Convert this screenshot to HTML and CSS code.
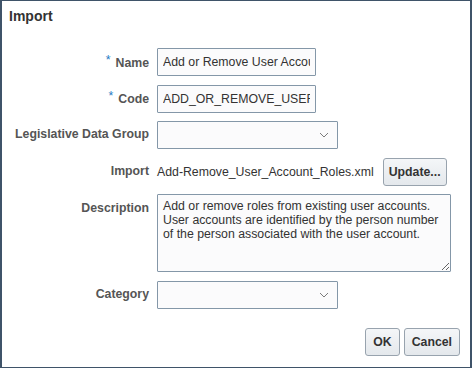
FILE: index.html
```html
<!DOCTYPE html>
<html>
	<head>
		<meta charset="utf-8">
		<title>Import</title>
		<link rel="stylesheet" href="styles.css">
	</head>
	<body>
		<div class="dialog">
			<div class="title">Import</div>
			<div class="form">
				<label class="label"><span class="req">*</span>Name</label>
				<div class="field"><input class="text" type="text" value="Add or Remove User Account Roles"></div>

				<label class="label"><span class="req">*</span>Code</label>
				<div class="field"><input class="text" type="text" value="ADD_OR_REMOVE_USER_ACCOUNT_ROLES"></div>

				<label class="label">Legislative Data Group</label>
				<div class="field">
					<div class="choice">
						<select class="select"><option></option></select>
						<svg class="chevron" width="10" height="6" viewBox="0 0 10 6"><path d="M1 1 L5 5 L9 1" fill="none" stroke="#7b7b7b" stroke-width="1"/></svg>
					</div>
				</div>

				<label class="label">Import</label>
				<div class="field file">
					<span class="filename">Add-Remove_User_Account_Roles.xml</span>
					<button class="btn narrow">Update...</button>
				</div>

				<label class="label top">Description</label>
				<div class="field"><textarea class="area">Add or remove roles from existing user accounts. User accounts are identified by the person number of the person associated with the user account.</textarea></div>

				<label class="label">Category</label>
				<div class="field">
					<div class="choice">
						<select class="select"><option></option></select>
						<svg class="chevron" width="10" height="6" viewBox="0 0 10 6"><path d="M1 1 L5 5 L9 1" fill="none" stroke="#7b7b7b" stroke-width="1"/></svg>
					</div>
				</div>
			</div>
			<div class="footer">
				<button class="btn">OK</button>
				<button class="btn">Cancel</button>
			</div>
		</div>
	</body>
</html>
```

FILE: styles.css
```css
* {
	margin: 0;
	padding: 0;
	box-sizing: border-box;
}

body {
	font-family: "Liberation Sans", Arial, sans-serif;
	font-size: 12.3px;
	color: #333;
	background: #fff;
}

.dialog {
	width: 472px;
	height: 368px;
	border: 1px solid #3f5369;
	border-left-width: 2px;
	border-right-width: 2px;
	display: flex;
	flex-direction: column;
}

.title {
	font-size: 14px;
	font-weight: bold;
	line-height: 16px;
	color: #333;
	padding: 7px 0 0 7px;
}

.form {
	display: grid;
	grid-template-columns: 147px 1fr;
	column-gap: 8px;
	row-gap: 8.5px;
	margin-top: 24px;
	align-items: center;
}

.label {
	text-align: right;
	font-weight: bold;
	color: #555;
	white-space: nowrap;
	line-height: 14px;
	padding-bottom: 2px;
}

.label.top {
	align-self: start;
	padding-top: 7px;
}

.req {
	color: #1f7ac4;
	font-weight: normal;
	margin-right: 5px;
	vertical-align: 3px;
}

.field {
	display: flex;
	align-items: center;
}

.text {
	width: 159px;
	height: 28px;
	border: 1px solid #8497a8;
	border-radius: 1px;
	background: #fbfbfc;
	padding: 0 5px;
	font-family: inherit;
	font-size: 12.3px;
	color: #333;
}

.choice {
	position: relative;
	width: 181px;
	height: 28px;
}

.select {
	appearance: none;
	width: 100%;
	height: 100%;
	border: 1px solid #8497a8;
	border-radius: 1px;
	background: #fbfbfc;
	font-family: inherit;
	font-size: 12.3px;
}

.chevron {
	position: absolute;
	right: 9px;
	top: 11px;
}

.file {
	height: 28px;
}

.filename {
	color: #333;
	margin-right: 9px;
}

.btn {
	height: 28px;
	padding: 0 7px;
	border: 1px solid #98a3ae;
	border-radius: 3px;
	background: linear-gradient(#f4f6f8, #e4e8ec);
	font-family: inherit;
	font-size: 12.3px;
	font-weight: bold;
	color: #333;
}

.btn.narrow {
	padding: 0 5px;
}

.area {
	width: 294px;
	height: 78px;
	border: 1px solid #8497a8;
	border-radius: 1px;
	background: #fbfbfc;
	padding: 4px 5px;
	font-family: inherit;
	font-size: 12.3px;
	line-height: 14px;
	color: #333;
}

.footer {
	display: flex;
	justify-content: flex-end;
	gap: 4px;
	margin-top: 19px;
	padding-right: 10px;
}
```
